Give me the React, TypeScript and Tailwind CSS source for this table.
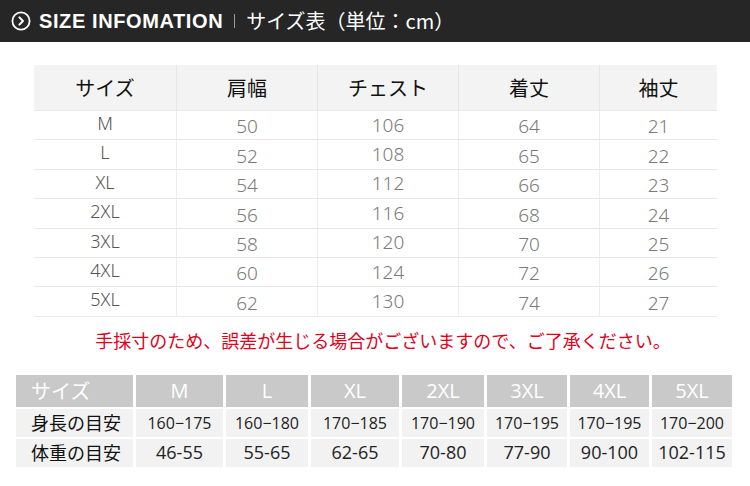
const jp = '"Noto Sans CJK JP", sans-serif';

const heads = ['サイズ', '肩幅', 'チェスト', '着丈', '袖丈'];
const rows = [
    ['M', '50', '106', '64', '21'],
    ['L', '52', '108', '65', '22'],
    ['XL', '54', '112', '66', '23'],
    ['2XL', '56', '116', '68', '24'],
    ['3XL', '58', '120', '70', '25'],
    ['4XL', '60', '124', '72', '26'],
    ['5XL', '62', '130', '74', '27'],
];
const colW = ['w-[143px]', 'w-[141px]', 'w-[141px]', 'w-[141px]', 'w-[117px]'];

const sizes = ['M', 'L', 'XL', '2XL', '3XL', '4XL', '5XL'];
const sizeW = ['w-[87px]', 'w-[82px]', 'w-[88px]', 'w-[82px]', 'w-[80px]', 'w-[79px]', 'w-[80px]'];
const height = ['160−175', '160−180', '170−185', '170−190', '170−195', '170−195', '170−200'];
const weight = ['46-55', '55-65', '62-65', '70-80', '77-90', '90-100', '102-115'];

function Header() {
    return (
        <div className="flex items-center h-[42px] bg-[#262626] pl-[11px] text-white">
            <svg width="20" height="20" viewBox="0 0 20 20" fill="none" aria-hidden="true">
                <circle cx="10" cy="10" r="8.6" stroke="white" strokeWidth="1.8" />
                <path d="M8.4 6.4l3.6 3.6-3.6 3.6" stroke="white" strokeWidth="2" strokeLinecap="round" strokeLinejoin="round" />
            </svg>
            <span className="ml-[8px] text-[20px] font-bold tracking-[0.6px]" style={{ fontFamily: '"Liberation Sans", Arial, sans-serif' }}>
                SIZE INFOMATION
            </span>
            <span className="ml-[11px] w-px h-[14px] bg-[#9a9a9a]" />
            <span className="ml-[11px] text-[20px]" style={{ fontFamily: jp }}>
                サイズ表（単位：cm）
            </span>
        </div>
    );
}

function MeasureTable() {
    return (
        <div className="ml-[34px] mt-[23px] w-[683px]">
            <div className="flex h-[45px] bg-[#f3f3f3]">
                {heads.map((h, i) => (
                    <div
                        key={h}
                        className={`${colW[i]} flex items-center justify-center text-[20px] text-[#111] border-r border-[#e6e6e6] last:border-r-0`}
                        style={{ fontFamily: jp }}
                    >
                        {h}
                    </div>
                ))}
            </div>
            {rows.map((r) => (
                <div key={r[0]} className="flex h-[29.4px] border-t border-[#e8e8e8]">
                    {r.map((c, i) => (
                        <div
                            key={i}
                            className={`${colW[i]} flex justify-center border-r border-[#ececec] last:border-r-0 leading-none ${
                                i === 0
                                    ? 'items-start text-[#555] text-[18px] pt-[3px]'
                                    : i === 2
                                      ? 'items-center text-[#7a7a7a] text-[19px]'
                                      : 'items-end text-[#7a7a7a] text-[19px] pb-[3px]'
                            }`}
                            style={{ fontFamily: '"Noto Sans", sans-serif', fontWeight: 300 }}
                        >
                            {c}
                        </div>
                    ))}
                </div>
            ))}
            <div className="h-px bg-[#ececec]" />
        </div>
    );
}

function GuideTable() {
    const font = { fontFamily: '"Open Sans", ' + jp };
    return (
        <div className="ml-[16px] mt-[22px] flex flex-col gap-[2px]">
            <div className="flex gap-[3px] h-[32px]">
                <div className="w-[117px] bg-[#c9c9c9] text-white text-[20px] flex items-center pl-[15px]" style={{ fontFamily: jp }}>
                    サイズ
                </div>
                {sizes.map((s, i) => (
                    <div key={s} className={`${sizeW[i]} bg-[#c9c9c9] text-white text-[20px] flex items-center justify-center`} style={font}>
                        {s}
                    </div>
                ))}
            </div>
            {[
                ['身長の目安', height, 'text-[16px]'],
                ['体重の目安', weight, 'text-[18px]'],
            ].map(([label, vals, size]) => (
                <div key={label as string} className="flex gap-[3px] h-[28px]">
                    <div className="w-[117px] bg-[#f2f2f2] text-[#111] text-[18px] flex items-center pl-[15px]" style={{ fontFamily: jp }}>
                        {label as string}
                    </div>
                    {(vals as string[]).map((v, i) => (
                        <div key={i} className={`${sizeW[i]} bg-[#f2f2f2] text-[#222] ${size as string} flex items-center justify-center`} style={font}>
                            {v}
                        </div>
                    ))}
                </div>
            ))}
        </div>
    );
}

export default function App() {
    return (
        <div className="w-[750px] h-[486px] bg-white overflow-hidden">
            <Header />
            <MeasureTable />
            <div className="mt-[10px] text-center text-[18px] leading-[26px] text-[#e1001b] pl-[16px]" style={{ fontFamily: jp }}>
                手採寸のため、誤差が生じる場合がございますので、ご了承ください。
            </div>
            <GuideTable />
        </div>
    );
}
